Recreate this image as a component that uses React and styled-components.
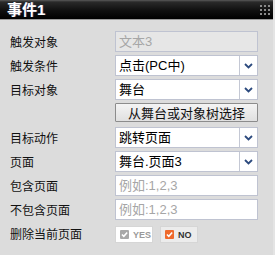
import React from "react"
import styled, { createGlobalStyle } from "styled-components"

const GlobalStyle = createGlobalStyle`
    html, body {
        margin: 0;
        padding: 0;
        background: #dcdcdc;
    }
    body {
        font-family: "Liberation Sans", "Noto Sans CJK SC", sans-serif;
    }
`

const Panel = styled.div({
    width: "275px",
    height: "255px",
    background: "#dcdcdc",
    boxSizing: "border-box",
    borderRight: "2px solid #e4e4e4",
    overflow: "hidden"
})

const TitleBar = styled.div({
    height: "19px",
    background: "linear-gradient(#5a5a5a 0px, #2a2a2a 2px, #111 10px, #000 19px)",
    borderBottom: "1px solid #9a9a9a",
    display: "flex",
    alignItems: "center",
    justifyContent: "space-between",
    padding: "0 3px 0 7px"
})

const Title = styled.h1({
    margin: 0,
    color: "#fff",
    fontSize: "15px",
    fontWeight: "bold",
    lineHeight: "19px",
    fontFamily: "\"Liberation Sans\", \"Noto Sans CJK SC\", sans-serif",
    textShadow: "1px 0 0 rgba(120,120,255,0.35)"
})

const Grip = styled.div({
    display: "grid",
    gridTemplateColumns: "repeat(3, 2px)",
    gridAutoRows: "2px",
    gap: "2px",
    marginTop: "1px"
})

const GripDot = styled.span({
    background: "#8a8a8a"
})

const Form = styled.div({
    display: "grid",
    gridTemplateColumns: "105px 143px",
    rowGap: "3px",
    padding: "11px 0 0 10px",
    alignItems: "center"
})

const Label = styled.div({
    fontSize: "12px",
    color: "#111",
    fontFamily: "\"Noto Sans CJK SC\", sans-serif",
    lineHeight: "21px"
})

const Field = styled.div(props => ({
    height: "21px",
    boxSizing: "border-box",
    border: "1px solid #bfc3d1",
    background: props.$disabled ? "#e6e6e6" : "#fff",
    display: "flex",
    alignItems: "stretch",
    fontSize: "13px",
    fontFamily: "\"Liberation Sans\", \"Noto Sans CJK SC\", sans-serif",
    color: props.$muted ? "#a6a6a6" : "#000"
}))

const FieldText = styled.span({
    flexGrow: 1,
    padding: "0 3px",
    lineHeight: "19px",
    whiteSpace: "nowrap"
})

const ArrowBox = styled.span({
    width: "17px",
    borderLeft: "1px solid #c4c8d4",
    display: "flex",
    alignItems: "center",
    justifyContent: "center"
})

const PickButton = styled.button({
    gridColumn: 2,
    height: "19px",
    marginBottom: "2px",
    boxSizing: "border-box",
    border: "1px solid #8c8c8c",
    borderRadius: "1px",
    background: "linear-gradient(#f4f4f4, #e0e0e0)",
    fontSize: "13px",
    fontFamily: "\"Noto Sans CJK SC\", sans-serif",
    color: "#111",
    padding: 0,
    lineHeight: "17px"
})

const ToggleRow = styled.div({
    display: "flex",
    gap: "7px",
    marginTop: "2px"
})

const Toggle = styled.div(props => ({
    width: "38px",
    height: "17px",
    boxSizing: "border-box",
    border: "1px solid #d6d6d6",
    background: props.$active ? "#ececec" : "#fff",
    display: "flex",
    alignItems: "center",
    gap: "4px",
    paddingLeft: "4px",
    fontSize: "9px",
    fontWeight: "bold",
    fontFamily: "\"Liberation Sans\", sans-serif",
    color: props.$active ? "#333" : "#9a9a9a"
}))

const Check = styled.span(props => ({
    width: "9px",
    height: "9px",
    background: props.$active ? "#ef6a2c" : "#a8a8a8",
    borderRadius: "1px",
    display: "flex",
    alignItems: "center",
    justifyContent: "center"
}))

const Chevron = () => (
    <svg width="9" height="6" viewBox="0 0 9 6">
        <path d="M1 1 L4.5 4.5 L8 1" fill="none" stroke="#2c4a7e" strokeWidth="1.8" />
    </svg>
)

const Tick = () => (
    <svg width="7" height="7" viewBox="0 0 6 6">
        <path d="M0.8 3 L2.4 4.6 L5.3 1.2" fill="none" stroke="#fff" strokeWidth="1.3" />
    </svg>
)

const Select = ({children}) => (
    <Field>
        <FieldText>{children}</FieldText>
        <ArrowBox><Chevron /></ArrowBox>
    </Field>
)

const App = () => (
    <Panel>
        <GlobalStyle />
        <TitleBar>
            <Title>事件1</Title>
            <Grip>
                {Array.from({length: 9}).map((_, i) => <GripDot key={i} />)}
            </Grip>
        </TitleBar>
        <Form>
            <Label>触发对象</Label>
            <Field $disabled $muted><FieldText>文本3</FieldText></Field>

            <Label>触发条件</Label>
            <Select>点击(PC中)</Select>

            <Label>目标对象</Label>
            <Select>舞台</Select>

            <PickButton>从舞台或对象树选择</PickButton>

            <Label>目标动作</Label>
            <Select>跳转页面</Select>

            <Label>页面</Label>
            <Select>舞台.页面3</Select>

            <Label>包含页面</Label>
            <Field $muted><FieldText>例如:1,2,3</FieldText></Field>

            <Label>不包含页面</Label>
            <Field $muted><FieldText>例如:1,2,3</FieldText></Field>

            <Label>删除当前页面</Label>
            <ToggleRow>
                <Toggle><Check><Tick /></Check>YES</Toggle>
                <Toggle $active><Check $active><Tick /></Check>NO</Toggle>
            </ToggleRow>
        </Form>
    </Panel>
)

export default App
